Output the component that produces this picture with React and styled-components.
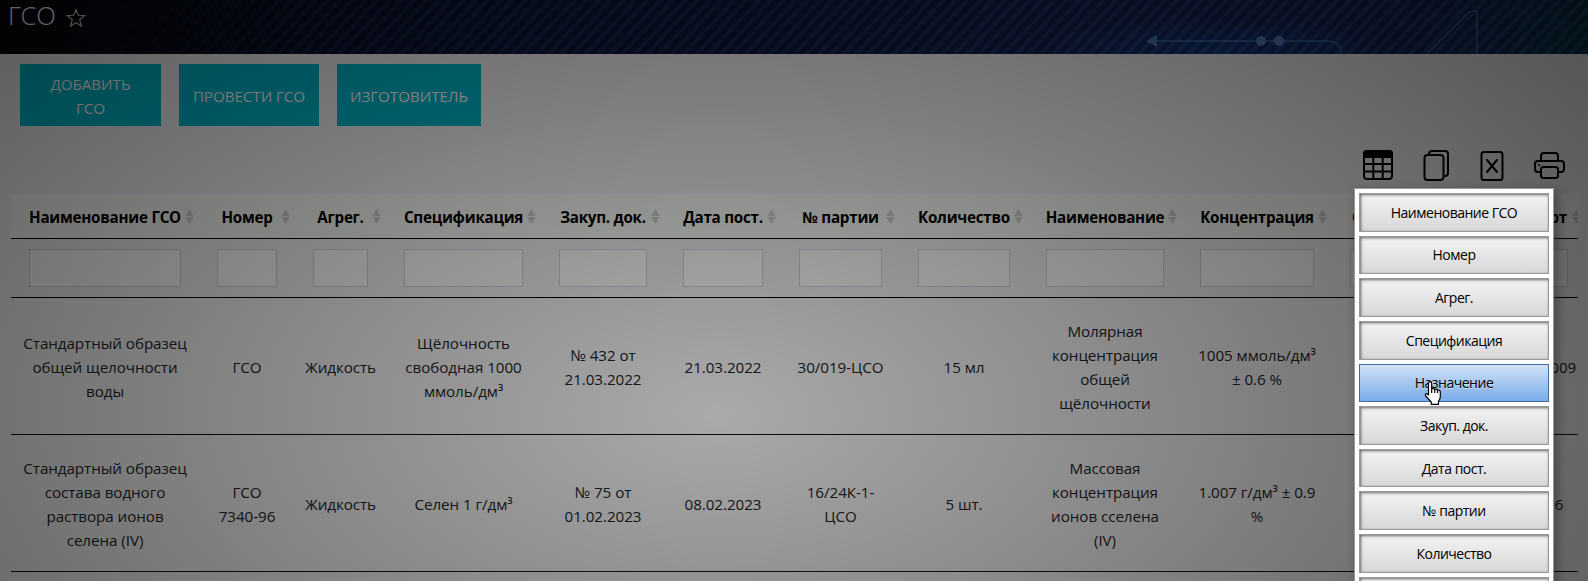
import React from 'react';
import styled, { createGlobalStyle, css } from 'styled-components';

const Global = createGlobalStyle`
  * { box-sizing: border-box; }
  html, body { margin: 0; background: #fff; overflow: hidden; }
  body { font-family: "Open Sans", "Noto Sans", sans-serif; font-size: 15.2px; letter-spacing: -0.06px; line-height: 24px; color: #212529; }
`;

const Page = styled.div`
  position: relative;
  height: 581px;
  overflow: hidden;
  background: #f2f3f6;
`;

const Banner = styled.header`
  position: relative;
  display: flex;
  align-items: flex-start;
  height: 54px;
  padding-left: 8px;
  overflow: hidden;
  background:
    linear-gradient(90deg, #06070c 0, rgba(6, 7, 12, 0) 300px),
    repeating-linear-gradient(133deg, rgba(0, 6, 16, 0.3) 0 3px, rgba(70, 90, 190, 0.1) 5px 7px, rgba(0, 6, 16, 0.3) 9px),
    radial-gradient(ellipse 180px 34px at 1220px 50px, rgba(16, 80, 170, 0.55), transparent),
    linear-gradient(90deg, #06070c 0, #081026 250px, #0f1a3e 500px, #131e48 800px, #1b2a60 1100px, #1c2d66 1420px, #103a60 1530px, #0c3c50 1588px);
`;

const Title = styled.h1`
  margin: 0;
  font-size: 25.6px;
  line-height: 31px;
  letter-spacing: -0.3px;
  font-weight: 300;
  color: #fff;
`;

const Star = styled.svg`
  margin: 8px 0 0 11px;
`;

const Circuit = styled.svg`
  position: absolute;
  right: 0;
  top: 0;
`;

const Actions = styled.nav`
  display: flex;
  gap: 18px;
  padding: 10px 20px 0;
`;

const ActionButton = styled.button`
  width: ${p => p.$w}px;
  height: 62px;
  padding: 2px ${p => p.$pad || 12}px 0;
  border: 0;
  background: #00b8cc;
  color: #fff;
  font: inherit;
  letter-spacing: inherit;
  line-height: 24px;
`;

const Tools = styled.div`
  display: flex;
  justify-content: flex-end;
  gap: 24px;
  padding: 22px 22px 0 0;
  height: 68px;
`;

const ToolIcon = styled.svg`
  width: 33px;
  height: 34px;
  fill: none;
  stroke: #000;
  stroke-width: 2;
  stroke-linecap: round;
  stroke-linejoin: round;
`;

const TableFrame = styled.main`
  margin: 0 10px 0 11px;
  overflow: hidden;
`;

const Table = styled.table`
  width: 1575px;
  table-layout: fixed;
  border-collapse: separate;
  border-spacing: 0;
  text-align: center;
`;

const HeadCell = styled.th`
  position: relative;
  height: 45px;
  padding: 1px 0 0;
  background: #f9fcf8;
  border-bottom: 1px solid #000;
  color: #000;
  font-weight: 700;
  font-size: 15.2px;
  letter-spacing: -0.25px;
  white-space: nowrap;
`;

const SortMark = styled.svg`
  position: absolute;
  right: 5px;
  top: 15px;
  fill: #d2d2d2;
`;

const FilterCell = styled.td`
  height: 59px;
  padding: 0 18px;
  border-bottom: 1px solid #000;
`;

const FilterInput = styled.input`
  display: block;
  width: 100%;
  height: 38px;
  padding: 0;
  border: 1px solid #ced4da;
  border-radius: 0;
  background: #fff;
`;

const Cell = styled.td`
  height: 137px;
  padding: 2px 0 0;
  background: #f3f3f3;
  border-bottom: 1px solid #111;
  white-space: pre-line;
`;

const Dimmer = styled.div`
  position: absolute;
  inset: 0;
  background: radial-gradient(ellipse 1259px 700px at 717px 413px, rgba(0, 0, 0, 0.3), rgba(0, 0, 0, 0.7));
`;

const Menu = styled.div`
  position: absolute;
  left: 1354px;
  top: 188px;
  width: 200px;
  padding: 4px;
  border: 1px solid #999;
  background: #fff;
  box-shadow: 3px 4px 10px 1px rgba(0, 0, 0, 0.3);
  display: flex;
  flex-direction: column;
  gap: 4px;
`;

const MenuItem = styled.button`
  height: 38.64px;
  flex: none;
  padding: 1px 0 0;
  border: 1px solid #999;
  background: linear-gradient(#f3f3f3, #d8d8d8);
  box-shadow: inset 1px 1px 3px #666;
  color: #000;
  font: 14px/22px "Open Sans", "Noto Sans", sans-serif;
  letter-spacing: -0.5px;
  ${p => p.$focused && css`
    border-color: #426c9e;
    background: linear-gradient(#d1e2f7, #79ace9);
    box-shadow: none;
    text-shadow: 0 1px 0 #c4def1;
  `}
`;

const Pointer = styled.svg`
  position: absolute;
  left: 1424px;
  top: 380px;
`;

const columns = [
  ['Наименование ГСО', 188], ['Номер', 96], ['Агрег.', 91], ['Спецификация', 155],
  ['Закуп. док.', 124], ['Дата пост.', 116], ['№ партии', 119], ['Количество', 128],
  ['Наименование', 154], ['Концентрация', 150], ['Срок годности', 152], ['Паспорт', 102],
];

const rows = [
  ['Стандартный образец\nобщей щелочности\nводы', 'ГСО', 'Жидкость', 'Щёлочность\nсвободная 1000\nммоль/дм³',
    '№ 432 от\n21.03.2022', '21.03.2022', '30/019-ЦСО', '15 мл', 'Молярная\nконцентрация\nобщей\nщёлочности',
    '1005 ммоль/дм³\n± 0.6 %', '', '10735-2009'],
  ['Стандартный образец\nсостава водного\nраствора ионов\nселена (IV)', 'ГСО\n7340-96', 'Жидкость', 'Селен 1 г/дм³',
    '№ 75 от\n01.02.2023', '08.02.2023', '16/24К-1-\nЦСО', '5 шт.', 'Массовая\nконцентрация\nионов сселена\n(IV)',
    '1.007 г/дм³ ± 0.9\n%', '', '7340-96'],
];

const menu = ['Наименование ГСО', 'Номер', 'Агрег.', 'Спецификация', 'Назначение', 'Закуп. док.',
  'Дата пост.', '№ партии', 'Количество', 'Наименование'];

export default function App() {
  return (
    <Page>
      <Global />
      <Banner>
        <Title>ГСО</Title>
        <Star width="20" height="20" viewBox="0 0 20 20" fill="none" stroke="#fff" strokeOpacity=".85" strokeWidth="1.1">
          <path d="M10 1.6l2.3 5.6 6.4.3-5 4.2 1.8 6.4L10 14.6l-5.500 3.500 1.800-6.400-5-4.200 6.400-.300z" />
        </Star>
        <Circuit width="500" height="54" viewBox="0 0 500 54" fill="none" stroke="#3f6aa8" strokeOpacity=".75" strokeWidth="1.8">
          <path d="M69 41H240q11 0 14 13M339 54L380 13q9-6 9 3V54" />
          <path d="M58 41l11-6v12z" fill="#4a78b4" stroke="none" />
          <circle cx="173" cy="41" r="5" fill="#5580bb" stroke="none" />
          <circle cx="191" cy="41" r="5" fill="#5580bb" stroke="none" />
        </Circuit>
      </Banner>
      <Actions>
        <ActionButton $w={141} $pad={20}>ДОБАВИТЬ ГСО</ActionButton>
        <ActionButton $w={140}>ПРОВЕСТИ ГСО</ActionButton>
        <ActionButton $w={144}>ИЗГОТОВИТЕЛЬ</ActionButton>
      </Actions>
      <Tools>
        <ToolIcon viewBox="0 0 33 34">
          <rect x="2" y="3" width="28" height="28" rx="3" />
          <path d="M5 3h22q3 0 3 3v3H2V6q0-3 3-3z" fill="#000" />
          <path d="M2 16h28M2 23.500h28M11.300 9v22M20.700 9v22" />
        </ToolIcon>
        <ToolIcon viewBox="0 0 33 34">
          <rect x="5.500" y="7" width="19" height="25" rx="3" />
          <path d="M10 6q0-3 3-3h13q3 0 3 3v19q0 3-3 3" />
        </ToolIcon>
        <ToolIcon viewBox="0 0 33 34">
          <rect x="5.500" y="4" width="21" height="28" rx="2.500" />
          <path d="M11 12l10 12M21 12l-10 12" />
        </ToolIcon>
        <ToolIcon viewBox="0 0 33 34">
          <path d="M8 13V8q0-3 3-3h11q3 0 3 3v5M7 24H5q-3 0-3-3v-5q0-3 3-3h23q3 0 3 3v5q0 3-3 3h-2" />
          <rect x="8" y="19" width="17" height="11" rx="2.500" />
          <path d="M6 17h.1" />
        </ToolIcon>
      </Tools>
      <TableFrame>
        <Table>
          <colgroup>{columns.map(([name, width]) => <col key={name} width={width} />)}</colgroup>
          <thead>
            <tr>
              {columns.map(([name]) => (
                <HeadCell key={name}>
                  {name}
                  <SortMark width="9" height="15" viewBox="0 0 9 15"><path d="M4.500 0L8.700 7H.3zM4.500 15L8.700 8H.3z" /></SortMark>
                </HeadCell>
              ))}
            </tr>
            <tr>{columns.map(([name]) => <FilterCell key={name}><FilterInput /></FilterCell>)}</tr>
          </thead>
          <tbody>
            {rows.map((row, r) => <tr key={r}>{row.map((text, c) => <Cell key={c}>{text}</Cell>)}</tr>)}
          </tbody>
        </Table>
      </TableFrame>
      <Dimmer />
      <Menu>
        {menu.map(name => <MenuItem key={name} $focused={name === 'Назначение'}>{name}</MenuItem>)}
      </Menu>
      <Pointer width="18" height="26" viewBox="0 0 18 26" fill="#fff" stroke="#000" strokeWidth="1.2" strokeLinejoin="round">
        <path d="M4.500 15V3.500q0-1.800 1.600-1.800T7.700 3.500V9q2-1.500 3 .5 2-1 2.800.7 2.600-.7 2.800 1.800v4.500q0 3-1.800 4.500v3.300H7.200V22L1.700 16q-1-2 .8-2.500z" />
        <path d="M7.700 9v4M10.700 9.500v3.500M13.500 10.200V13" />
      </Pointer>
    </Page>
  );
}
